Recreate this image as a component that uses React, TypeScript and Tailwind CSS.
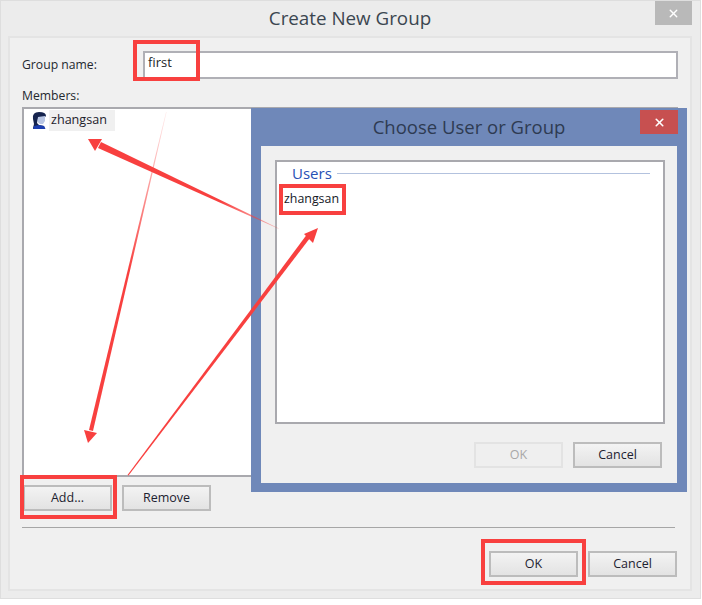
import { X } from 'lucide-react';

const font = "font-['Open_Sans','Noto_Sans',sans-serif]";

function Btn({ label, disabled = false }: { label: string; disabled?: boolean }) {
  return (
    <button
      className={
        disabled
          ? 'w-[89px] h-[26px] border-2 border-[#e3e3e3] bg-[#efefef] text-[12.5px] text-[#a8a8a8]'
          : 'w-[89px] h-[26px] border-2 border-[#bcbcbc] bg-gradient-to-b from-[#f3f3f3] to-[#e3e3e3] text-[12.5px] text-[#1c2230]'
      }
    >
      {label}
    </button>
  );
}

function UserIcon() {
  return (
    <svg width="16" height="19" viewBox="0 0 16 19">
      <path d="M2 17 L3 13 L2 8 Q1 1 8 1 Q15 1 15 5 L14 6 L7 7 L6 12 L8 14 L13 15 L14 18 L2 18 Z" fill="#16244e" />
      <path d="M7 6 L14 5 L14 10 L12 13 L9 13 L6.5 11 Z" fill="#b9c6e4" />
      <path d="M3 15 L8 14 L13 15 L14.5 18 L2 18 Z" fill="#1d3fb0" />
    </svg>
  );
}

function RedBox({ className }: { className: string }) {
  return <div className={`absolute border-4 border-[#f8403f] pointer-events-none ${className}`} />;
}

// the second window that sits on top of the first
function ChooseDialog() {
  return (
    <div className="absolute left-[251px] top-[108px] w-[436px] h-[384px] bg-[#6f88b9] flex flex-col px-[10px] pb-[9px]">
      <div className="h-[38px] flex items-center justify-center text-[18.5px] text-[#2e3b52]">
        Choose User or Group
      </div>
      <div className="absolute right-[9px] top-[2px] w-[38px] h-[24px] bg-[#c75050] flex items-center justify-center">
        <X size={13} strokeWidth={3} color="#ffffff" />
      </div>
      <div className="flex-1 bg-[#f0f0f0] flex flex-col px-[14px] pt-[14px] pb-[15px]">
        <div className="h-[264px] w-[390px] bg-white border-2 border-[#a9a9ae] pl-[8px]">
          <div className="flex items-center h-[22px] pl-[7px] pr-[13px]">
            <span className="text-[15px] text-[#2750b5]">Users</span>
            <div className="flex-1 h-px bg-[#b3c2de] ml-[5px]" />
          </div>
          <div className="text-[12.4px] text-[#15181f] mt-[2px] -ml-[1px] leading-[26px]">zhangsan</div>
        </div>
        <div className="flex justify-end gap-[10px] mt-[18px] pr-px">
          <Btn label="OK" disabled />
          <Btn label="Cancel" />
        </div>
      </div>
    </div>
  );
}

export default function App() {
  return (
    <div className={`relative w-[702px] h-[605px] bg-white overflow-hidden ${font}`}>
      <div className="w-[701px] h-[599px] border border-[#dedede] bg-[#ececec] flex flex-col pl-[7px] pr-[8px] pb-[7px]">
        <div className="relative h-[35px] shrink-0 flex items-center justify-center text-[18.8px] text-[#3b4650]">
          Create New Group
          <div className="absolute right-0 top-0 w-[37px] h-[24px] bg-[#b9b9b9] flex items-center justify-center">
            <X size={13} strokeWidth={2.5} color="#ffffff" />
          </div>
        </div>

        <div className="flex-1 border-2 border-[#e4e4e4] bg-[#f0f0f0] flex flex-col pl-[12px] pr-[12px]">
          <div className="flex items-center mt-[12px] h-[29px]">
            <div className="w-[121px] text-[12.2px] text-[#24282f] pt-[2px]">Group name:</div>
            <div className="flex-1 h-[28px] bg-white border-2 border-[#b0b0b6] pl-[3px] pb-[3px] flex items-center text-[13px] text-[#1b1f28]">
              first
            </div>
          </div>
          <div className="text-[12.2px] text-[#24282f] mt-[7px] h-[21px] leading-[20px]">Members:</div>
          <div className="h-[370px] bg-white border-2 border-[#a9a9ae] pt-px pl-[7px]">
            <div className="flex items-center h-[21px]">
              <UserIcon />
              <div className="ml-[2px] w-[66px] h-[21px] bg-[#f0f0f0] pl-[2px] flex items-center text-[12.6px] text-[#1d222c]">
                zhangsan
              </div>
            </div>
          </div>
          <div className="flex gap-[10px] mt-[8px] pl-px">
            <Btn label="Add..." />
            <Btn label="Remove" />
          </div>
          <div className="h-px bg-[#a6a6a6] mt-[16px] mr-[3px]" />
          <div className="flex justify-end gap-[10px] mt-[23px] pr-px">
            <Btn label="OK" />
            <Btn label="Cancel" />
          </div>
        </div>
      </div>

      <ChooseDialog />

      {/* annotations */}
      <RedBox className="left-[133px] top-[40px] w-[67px] h-[41px]" />
      <RedBox className="left-[279px] top-[184px] w-[67px] h-[31px]" />
      <RedBox className="left-[20px] top-[475px] w-[97px] h-[44px]" />
      <RedBox className="left-[481px] top-[539px] w-[105px] h-[46px]" />

      <svg className="absolute left-0 top-0 pointer-events-none" width="702" height="605" viewBox="0 0 702 605">
        <defs>
          <linearGradient id="fadeB" x1="166" y1="112" x2="130" y2="270" gradientUnits="userSpaceOnUse">
            <stop offset="0" stopColor="#f8403f" stopOpacity="0.1" />
            <stop offset="1" stopColor="#f8403f" />
          </linearGradient>
          <linearGradient id="fadeA" x1="279" y1="229" x2="220" y2="202" gradientUnits="userSpaceOnUse">
            <stop offset="0" stopColor="#f8403f" stopOpacity="0.3" />
            <stop offset="1" stopColor="#f8403f" />
          </linearGradient>
        </defs>
        <polygon points="279,229 278,228 101,142 98,148" fill="url(#fadeA)" />
        <polygon points="88,139 102,139 95,151" fill="#f8403f" />
        <polygon points="166,112 166.6,112 93,431 89,430" fill="url(#fadeB)" />
        <polygon points="88,443 84,430 97,433" fill="#f8403f" />
        <polygon points="127.5,475 128.5,475.5 310,238 306.5,235" fill="#f8403f" />
        <polygon points="318,228 304,234 313,243" fill="#f8403f" />
      </svg>
    </div>
  );
}
